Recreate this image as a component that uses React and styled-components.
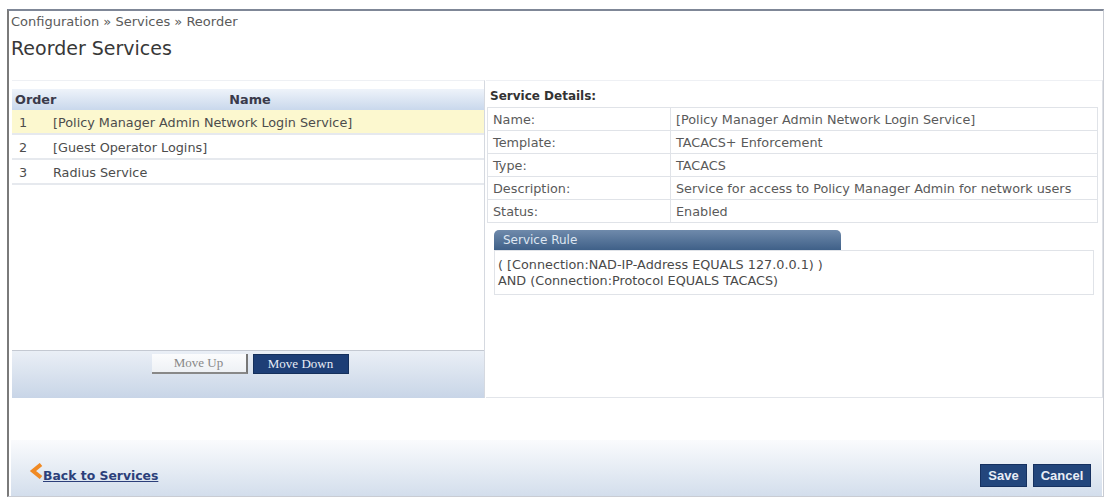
import React, { useState } from "react"
import styled, { createGlobalStyle } from "styled-components"

const GlobalStyle = createGlobalStyle`
    html, body {
        margin: 0;
        padding: 0;
        background: #fff;
    }
    body {
        font-family: "DejaVu Sans", Verdana, sans-serif;
        font-size: 12.8px;
        color: #4c4c4c;
    }
`

const Page = styled.div`
    width: 1106px;
    height: 501px;
    padding: 9px 2px 4px 7px;
    box-sizing: border-box;
`

const Frame = styled.div`
    height: 100%;
    box-sizing: border-box;
    border-top: 2px solid #7f8797;
    border-left: 2px solid #7a7a7a;
    border-right: 1px solid #c9ccd3;
    border-bottom: 1px solid #c9ccd3;
    display: flex;
    flex-direction: column;
`

const Breadcrumb = styled.div`
    padding: 3px 0 0 2px;
    line-height: 16px;
    font-size: 13px;
    color: #5a5a5a;
`

const Title = styled.h1`
    margin: 6px 0 0 2px;
    font-size: 19px;
    line-height: 24px;
    font-weight: normal;
    color: #383838;
    height: 44px;
`

const Content = styled.div`
    display: flex;
    margin-left: 3px;
    height: 318px;
`

const LeftPanel = styled.div`
    width: 472px;
    border-top: 1px solid #eef0f4;
    border-right: 1px solid #d5d9e0;
    display: flex;
    flex-direction: column;
`

const GridHeader = styled.div`
    display: grid;
    grid-template-columns: 40px 1fr;
    height: 20px;
    margin-top: 8px;
    padding-bottom: 1px;
    align-items: center;
    background: linear-gradient(#eef3fa, #c9d8ec);
    font-weight: bold;
    color: #3a3a4a;
    & > span:first-child { padding-left: 3px; }
    & > span:last-child { text-align: center; padding-right: 36px; }
`

const Row = styled.div`
    display: grid;
    grid-template-columns: 41px 1fr;
    height: 22px;
    padding-top: 1px;
    align-items: center;
    border-bottom: 2px solid #e6e9ee;
    background: ${p => (p.$selected ? "#fcf8cf" : "#fff")};
    cursor: pointer;
    & > span:first-child { padding-left: 7px; }
`

const ListFill = styled.div`
    flex: 1;
`

const ButtonBar = styled.div`
    height: 44px;
    border-top: 1px solid #c4c9d2;
    background: linear-gradient(#eaeff6, #c8d5e7);
    display: flex;
    justify-content: center;
    align-items: flex-start;
    gap: 5px;
    padding: 3px 0 0 4px;
`

const MoveButton = styled.button`
    width: 96px;
    height: 20px;
    font-family: "Liberation Serif", serif;
    font-size: 13px;
    border: none;
    ${p =>
        p.$primary
            ? `background: #1d3e76; color: #e8ecf5; box-shadow: inset 0 0 0 1px #15305c;`
            : `background: linear-gradient(#fbfcfd, #eef1f5); color: #888; border-right: 2px solid #777; border-bottom: 2px solid #888;`}
`

const RightPanel = styled.div`
    flex: 1;
    margin-left: 1px;
    border-top: 1px solid #eef0f4;
    border-right: 1px solid #dde0e6;
    border-bottom: 1px solid #e2e5ea;
    padding: 7px 4px 0 1px;
`

const SectionTitle = styled.div`
    font-weight: bold;
    font-size: 12px;
    line-height: 16px;
    color: #333;
    padding-left: 3px;
`

const DetailTable = styled.table`
    width: 100%;
    margin-top: 3px;
    border-collapse: collapse;
    border: 1px solid #e0e3e8;
    td {
        height: 22px;
        padding: 0 5px;
        border-bottom: 1px solid #e0e3e8;
        color: #5a5a5a;
    }
    td:first-child {
        width: 172px;
        border-right: 1px solid #e0e3e8;
    }
`

const RuleBox = styled.div`
    margin: 7px 4px 0 7px;
`

const RuleTab = styled.div`
    width: 347px;
    height: 20px;
    border-radius: 5px 5px 0 0;
    background: linear-gradient(#6f8aab, #3f6088);
    color: #dfe7f2;
    padding-left: 9px;
    box-sizing: border-box;
    display: flex;
    align-items: center;
    font-size: 12px;
`

const RuleBody = styled.div`
    border: 1px solid #e0e3e8;
    padding: 6px 3px 5px;
    color: #4a4a4a;
    line-height: 16px;
`

const Spacer = styled.div`
    flex: 1;
`

const Footer = styled.div`
    height: 56px;
    box-sizing: border-box;
    margin: 0 1px 0 2px;
    background: linear-gradient(#fafbfd, #d3deec);
    display: flex;
    align-items: center;
    justify-content: space-between;
    padding: 14px 11px 0 18px;
`

const BackLink = styled.a`
    display: flex;
    align-items: center;
    font-weight: bold;
    color: #2c3f7a;
    text-decoration: underline;
    font-size: 12.4px;
    svg { margin-right: 0; margin-top: -8px; }
`

const Actions = styled.div`
    display: flex;
    gap: 6px;
`

const ActionButton = styled.button`
    width: ${p => p.$w}px;
    height: 23px;
    padding: 0;
    background: #23467c;
    color: #e9eef6;
    border: 1px solid #163160;
    font-family: "Liberation Sans", Arial, sans-serif;
    font-weight: bold;
    font-size: 13px;
`

const services = [
    "[Policy Manager Admin Network Login Service]",
    "[Guest Operator Logins]",
    "Radius Service",
]

const details = [
    ["Name:", "[Policy Manager Admin Network Login Service]"],
    ["Template:", "TACACS+ Enforcement"],
    ["Type:", "TACACS"],
    ["Description:", "Service for access to Policy Manager Admin for network users"],
    ["Status:", "Enabled"],
]

function App() {
    const [selected, setSelected] = useState(0)

    return (
        <>
            <GlobalStyle/>
            <Page>
                <Frame>
                    <Breadcrumb>Configuration » Services » Reorder</Breadcrumb>
                    <Title>Reorder Services</Title>
                    <Content>
                        <LeftPanel>
                            <GridHeader>
                                <span>Order</span>
                                <span>Name</span>
                            </GridHeader>
                            {services.map((s, i) => (
                                <Row key={s} $selected={i === selected} onClick={() => setSelected(i)}>
                                    <span>{i + 1}</span>
                                    <span>{s}</span>
                                </Row>
                            ))}
                            <ListFill/>
                            <ButtonBar>
                                <MoveButton>Move Up</MoveButton>
                                <MoveButton $primary>Move Down</MoveButton>
                            </ButtonBar>
                        </LeftPanel>
                        <RightPanel>
                            <SectionTitle>Service Details:</SectionTitle>
                            <DetailTable>
                                <tbody>
                                    {details.map(([k, v]) => (
                                        <tr key={k}>
                                            <td>{k}</td>
                                            <td>{v}</td>
                                        </tr>
                                    ))}
                                </tbody>
                            </DetailTable>
                            <RuleBox>
                                <RuleTab>Service Rule</RuleTab>
                                <RuleBody>
                                    <div>( [Connection:NAD-IP-Address EQUALS 127.0.0.1) )</div>
                                    <div>AND (Connection:Protocol EQUALS TACACS)</div>
                                </RuleBody>
                            </RuleBox>
                        </RightPanel>
                    </Content>
                    <Spacer/>
                    <Footer>
                        <BackLink href="#">
                            <svg width="14" height="16" viewBox="0 0 14 16">
                                <path d="M12 1.5 L4 8 L12 14.5" fill="none" stroke="#f08a24" strokeWidth="4"/>
                            </svg>
                            Back to Services
                        </BackLink>
                        <Actions>
                            <ActionButton $w={47}>Save</ActionButton>
                            <ActionButton $w={58}>Cancel</ActionButton>
                        </Actions>
                    </Footer>
                </Frame>
            </Page>
        </>
    )
}

export default App
